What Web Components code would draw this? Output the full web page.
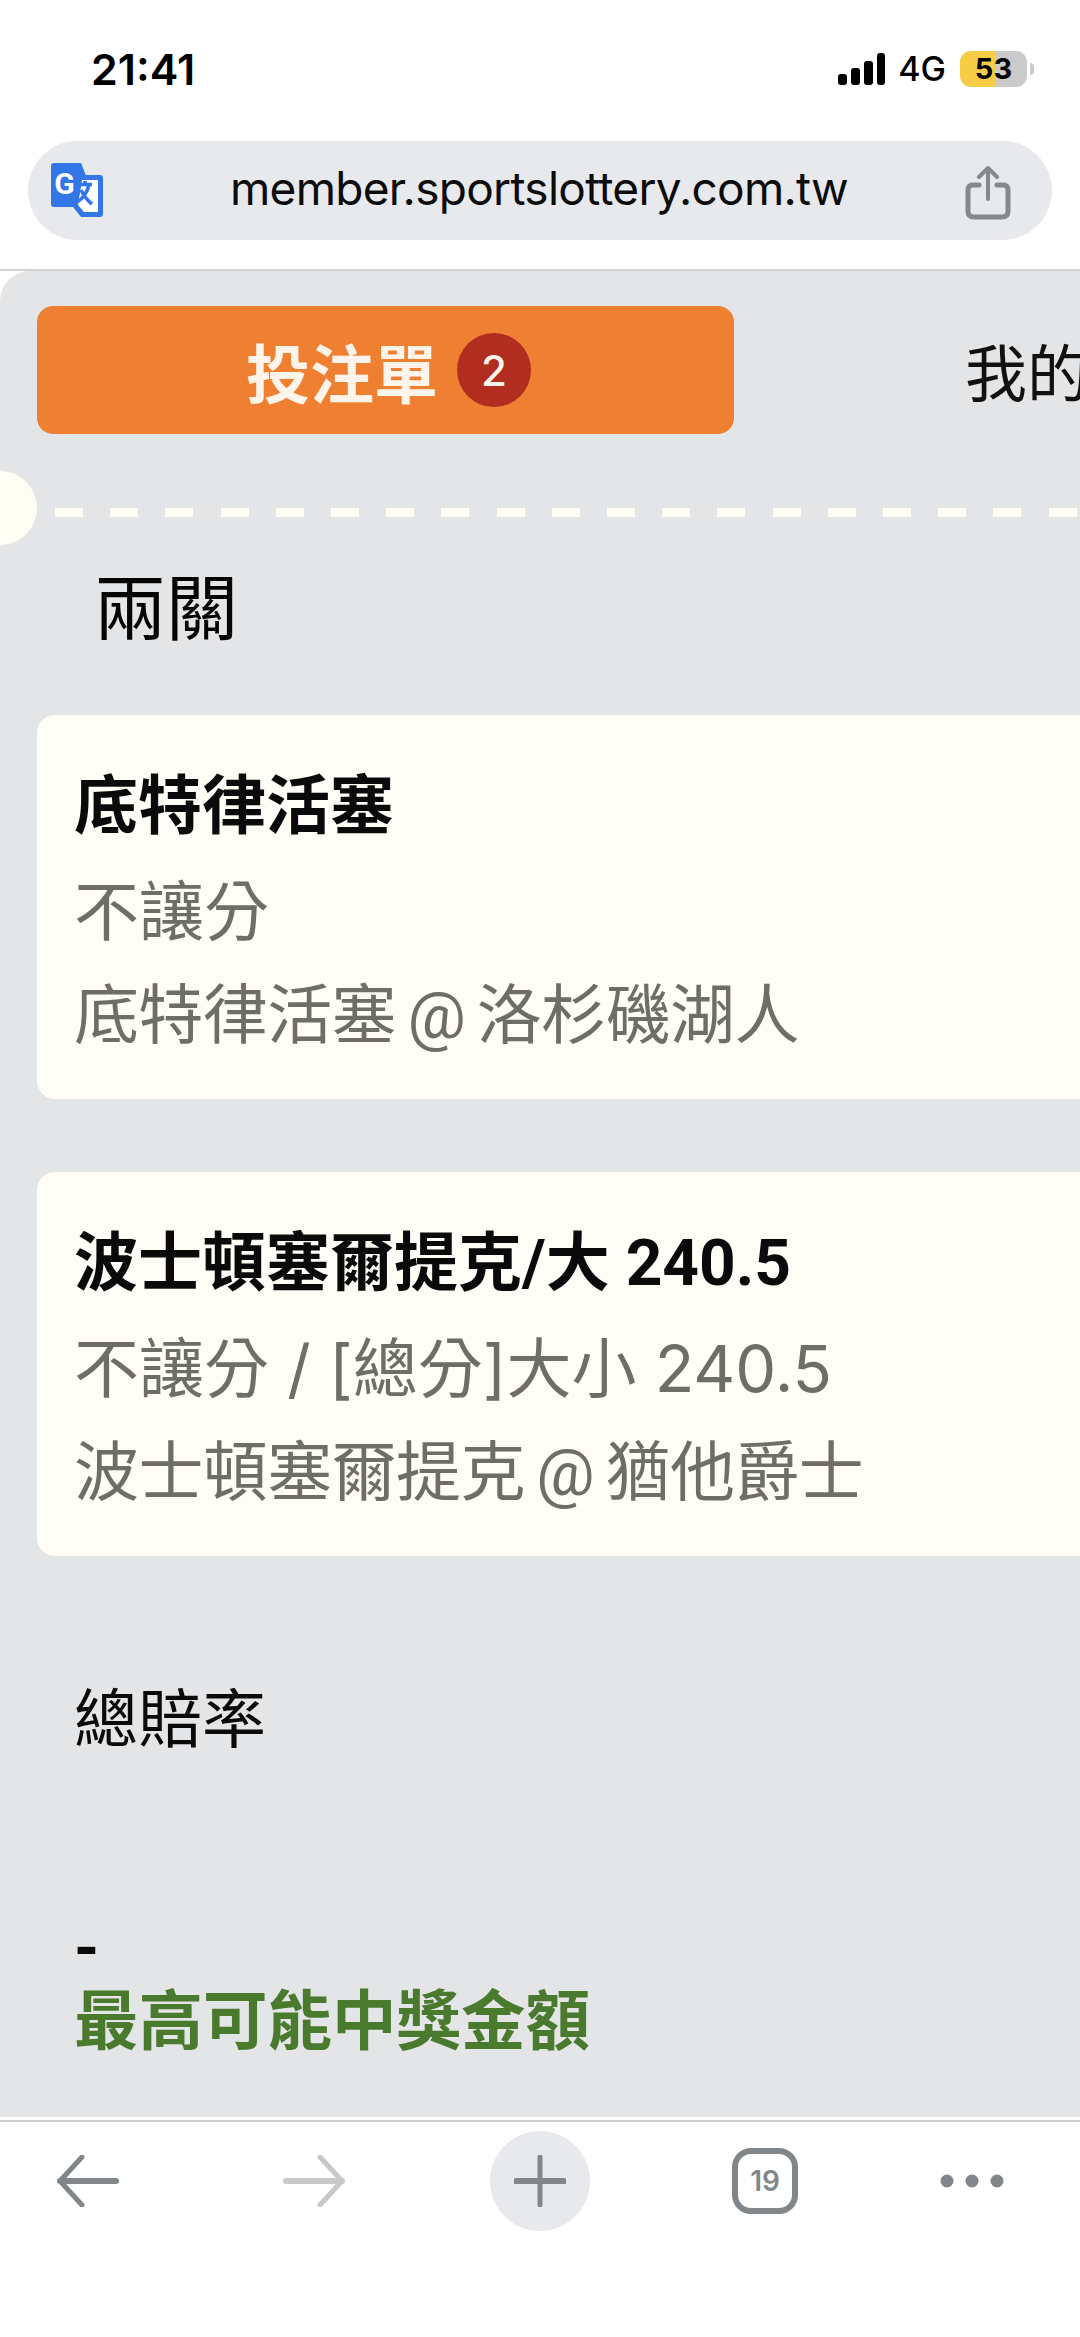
<!DOCTYPE html>
<html lang="zh-Hant">
<head>
<meta charset="utf-8">
<title>投注單</title>
<style>
  html, body { margin: 0; height: 100%; background: #fff; overflow: hidden; }
  body {
    display: flex;
    flex-direction: column;
    height: 2337px;
    font-family: Inter, "Noto Sans CJK TC", sans-serif;
  }
</style>
</head>
<body>
  <status-bar time="21:41" network="4G" battery="53"></status-bar>
  <url-bar>member.sportslottery.com.tw</url-bar>
  <bet-page>
    <bet-tabs count="2" active="投注單" other="我的注單"></bet-tabs>
    <ticket-divider></ticket-divider>
    <parlay-title>兩關</parlay-title>
    <bet-card>
      <span slot="title">底特律活塞</span>
      <span slot="market">不讓分</span>
      <span slot="pick">底特律活塞 @ 洛杉磯湖人</span>
    </bet-card>
    <bet-card>
      <span slot="title">波士頓塞爾提克/大 240.5</span>
      <span slot="market">不讓分 / [總分]大小 240.5</span>
      <span slot="pick">波士頓塞爾提克 @ 猶他爵士</span>
    </bet-card>
    <bet-summary label="總賠率" value="-" prize="最高可能中獎金額"></bet-summary>
  </bet-page>
  <browser-toolbar tabs="19"></browser-toolbar>

<script>
// status bar at the very top
class StatusBar extends HTMLElement {
  connectedCallback() {
    const time = this.getAttribute("time");
    const network = this.getAttribute("network");
    const battery = this.getAttribute("battery");
    this.attachShadow({ mode: "open" }).innerHTML = `
      <style>
        :host {
          display: flex;
          align-items: center;
          justify-content: space-between;
          height: 141px;
          padding: 0 46px 4px 91px;
          box-sizing: border-box;
          color: #000;
        }
        .time { font-size: 43px; font-weight: 600; }
        .right { display: flex; align-items: center; }
        .net { font-size: 34px; font-weight: 500; margin: 0 14px 0 13px; }
        .batt {
          width: 67px;
          height: 36px;
          border-radius: 11px;
          overflow: hidden;
          background: linear-gradient(90deg, #f8cd46 53%, #cbcbcb 53%);
          font-size: 29px;
          font-weight: 700;
          line-height: 36px;
          text-align: center;
        }
        .nub { width: 4px; height: 12px; margin-left: 3px; background: #cbcbcb; border-radius: 0 4px 4px 0; }
      </style>
      <span class="time">${time}</span>
      <div class="right">
        <svg width="47" height="32" viewBox="0 0 47 32" fill="#000">
          <rect x="0" y="21" width="9" height="11" rx="3"/>
          <rect x="13" y="15" width="9" height="17" rx="3"/>
          <rect x="26" y="8" width="9" height="24" rx="3"/>
          <rect x="39" y="0" width="8" height="32" rx="3"/>
        </svg>
        <span class="net">${network}</span>
        <div class="batt">${battery}</div>
        <div class="nub"></div>
      </div>
    `;
  }
}

class UrlBar extends HTMLElement {
  connectedCallback() {
    this.attachShadow({ mode: "open" }).innerHTML = `
      <style>
        :host {
          display: flex;
          align-items: center;
          justify-content: space-between;
          height: 99px;
          margin: 0 28px 29px;
          padding: 0 41px 0 23px;
          box-sizing: border-box;
          background: #e8e9ed;
          border-radius: 50px;
        }
        .url { font-size: 46px; color: #0c0c0c; letter-spacing: -0.7px; margin: -6px 0 0 8px; }
        .share { margin-top: 4px; }
      </style>
      <svg width="54" height="56" viewBox="0 0 54 56">
        <path d="M3 0H30L47 44H3Q0 44 0 41V3Q0 0 3 0Z" fill="#3276e8"/>
        <path d="M22 12H49Q52 12 52 15V51Q52 54 49 54H30L22 44Z" fill="#3276e8"/>
        <path d="M31 17H47V49H33L27 42Z" fill="#fff"/>
        <text x="13.5" y="31" text-anchor="middle" font-family="Roboto, sans-serif" font-weight="700" font-size="30" fill="#fff">G</text>
        <path d="M27 18.5H41M34 15V18.5M38 18.500C36 28 31 33 26 36M30 24C33 30 37 35 41 38" transform="translate(0 3)" fill="none" stroke="#3276e8" stroke-width="3.600"/>
      </svg>
      <span class="url"><slot></slot></span>
      <svg class="share" width="46" height="54" viewBox="0 0 46 54" fill="none" stroke="#85898d" stroke-linecap="round" stroke-linejoin="round">
        <path d="M14 19H8Q3 19 3 24V45Q3 51 9 51H37Q43 51 43 45V24Q43 19 38 19H32" stroke-width="5"/>
        <path d="M23 33V3M14 11L23 2L32 11" stroke-width="4"/>
      </svg>
    `;
  }
}

// the grey panel that holds the whole bet slip
class BetPage extends HTMLElement {
  connectedCallback() {
    this.attachShadow({ mode: "open" }).innerHTML = `
      <style>
        :host {
          display: flex;
          flex: 1;
          min-height: 0;
          overflow: hidden;
          border-top: 2px solid #d2d2d2;
        }
        .panel {
          display: flex;
          flex-direction: column;
          flex: 1;
          min-width: 0;
          overflow: hidden;
          background: #e4e5e7;
          border-radius: 30px 0 0 0;
          padding-top: 35px;
        }
      </style>
      <div class="panel"><slot></slot></div>
    `;
  }
}

class BetTabs extends HTMLElement {
  connectedCallback() {
    const count = this.getAttribute("count");
    const active = this.getAttribute("active");
    const other = this.getAttribute("other");
    this.attachShadow({ mode: "open" }).innerHTML = `
      <style>
        :host { display: flex; align-items: center; margin-left: 37px; white-space: nowrap; flex: none; }
        .active {
          flex: 0 0 697px;
          height: 128px;
          display: flex;
          align-items: center;
          justify-content: center;
          gap: 19px;
          box-sizing: border-box;
          padding-left: 6px;
          background: #ef8032;
          border-radius: 16px;
          color: #fff4ea;
          font-size: 64px;
          font-weight: 600;
        }
        .badge {
          width: 74px;
          height: 74px;
          border-radius: 50%;
          background: #b12d20;
          display: flex;
          align-items: center;
          justify-content: center;
          font-size: 42px;
          font-weight: 500;
          color: #fff4ea;
        }
        .other { margin-left: 231px; font-size: 62px; color: #111; }
      </style>
      <div class="active"><span>${active}</span><span class="badge">${count}</span></div>
      <div class="other">${other}</div>
    `;
  }
}

class TicketDivider extends HTMLElement {
  connectedCallback() {
    this.attachShadow({ mode: "open" }).innerHTML = `
      <style>
        :host { display: block; position: relative; flex: none; height: 74px; margin-top: 37px; }
        .notch {
          position: absolute;
          left: -37px;
          top: 0;
          width: 74px;
          height: 74px;
          border-radius: 50%;
          background: #fffdf4;
        }
        .dash {
          position: absolute;
          left: 55px;
          right: 0;
          top: 37px;
          height: 9px;
          background: repeating-linear-gradient(90deg, #fffdf4 0 28px, transparent 28px 55.200px);
        }
      </style>
      <div class="notch"></div>
      <div class="dash"></div>
    `;
  }
}

class ParlayTitle extends HTMLElement {
  connectedCallback() {
    this.attachShadow({ mode: "open" }).innerHTML = `
      <style>
        :host {
          display: block;
          flex: none;
          height: 170px;
          padding-left: 94px;
          padding-top: 13px;
          box-sizing: border-box;
          font-size: 72px;
          line-height: 100px;
          color: #050505;
        }
      </style>
      <slot></slot>
    `;
  }
}

class BetCard extends HTMLElement {
  connectedCallback() {
    this.attachShadow({ mode: "open" }).innerHTML = `
      <style>
        :host {
          display: flex;
          flex-direction: column;
          flex: none;
          width: 1100px;
          height: 384px;
          margin: 0 0 73px 37px;
          padding: 39px 0 0 37px;
          box-sizing: border-box;
          background: #fffdf6;
          border-radius: 18px;
          font-size: 65px;
          line-height: 105px;
          white-space: nowrap;
          color: #6e6e68;
        }
        .title { font-family: Roboto, "Noto Sans CJK TC", sans-serif; font-size: 64px; font-weight: 700; color: #0a0a0a; }
        .pick { font-family: Roboto, "Noto Sans CJK TC", sans-serif; word-spacing: -4px; letter-spacing: -0.6px; }
      </style>
      <div class="title"><slot name="title"></slot></div>
      <div><slot name="market"></slot></div>
      <div class="pick"><slot name="pick"></slot></div>
    `;
  }
}

class BetSummary extends HTMLElement {
  connectedCallback() {
    const label = this.getAttribute("label");
    const value = this.getAttribute("value");
    const prize = this.getAttribute("prize");
    this.attachShadow({ mode: "open" }).innerHTML = `
      <style>
        :host { display: block; flex: none; padding: 0 0 0 74px; font-size: 64px; color: #0a0a0a; }
        .label { margin-top: 40px; line-height: 100px; }
        .value { margin-top: 145px; line-height: 70px; font-family: Roboto, sans-serif; font-weight: 700; }
        .prize { line-height: 76px; margin-top: -1px; font-size: 64.500px; font-weight: 700; color: #4a7a2e; }
      </style>
      <div class="label">${label}</div>
      <div class="value">${value}</div>
      <div class="prize">${prize}</div>
    `;
  }
}

class BrowserToolbar extends HTMLElement {
  connectedCallback() {
    const tabs = this.getAttribute("tabs");
    this.attachShadow({ mode: "open" }).innerHTML = `
      <style>
        :host {
          display: grid;
          grid-template-columns: 226px 207px 242px 208px auto;
          align-items: start;
          height: 220px;
          padding: 11px 0 0 57px;
          box-sizing: border-box;
          background: #fff;
          border-top: 3px solid #fff;
          box-shadow: inset 0 3px 0 -1px #cfcfcf;
        }
        .plus {
          width: 100px;
          height: 100px;
          border-radius: 50%;
          background: #e8e9ed;
          display: flex;
          align-items: center;
          justify-content: center;
        }
        .slot { height: 100px; display: flex; align-items: center; }
        .tabs {
          width: 66px;
          height: 66px;
          box-sizing: border-box;
          border: 6px solid #81868a;
          border-radius: 19px;
          display: flex;
          align-items: center;
          justify-content: center;
          font-size: 28px;
          font-weight: 600;
          color: #81868a;
        }
      </style>
      <div class="slot">
        <svg width="62" height="52" viewBox="0 0 62 52" fill="none" stroke="#81868a" stroke-linecap="round" stroke-linejoin="round">
          <path d="M3 26H59" stroke-width="6"/>
          <path d="M25 2L3 26L25 50" stroke-width="5"/>
        </svg>
      </div>
      <div class="slot">
        <svg width="62" height="52" viewBox="0 0 62 52" fill="none" stroke="#c8c8c8" stroke-linecap="round" stroke-linejoin="round">
          <path d="M3 26H59" stroke-width="6"/>
          <path d="M37 2L59 26L37 50" stroke-width="5"/>
        </svg>
      </div>
      <div class="plus">
        <svg width="52" height="52" viewBox="0 0 52 52" fill="none" stroke="#81868a" stroke-linecap="round">
          <path d="M26 2V50" stroke-width="5"/>
          <path d="M2 26H50" stroke-width="6"/>
        </svg>
      </div>
      <div class="slot"><div class="tabs">${tabs}</div></div>
      <div class="slot">
        <svg width="64" height="14" viewBox="0 0 64 14" fill="#81868a">
          <circle cx="7" cy="7" r="6.500"/><circle cx="32" cy="7" r="6.500"/><circle cx="57" cy="7" r="6.500"/>
        </svg>
      </div>
    `;
  }
}

customElements.define("status-bar", StatusBar);
customElements.define("url-bar", UrlBar);
customElements.define("bet-page", BetPage);
customElements.define("bet-tabs", BetTabs);
customElements.define("ticket-divider", TicketDivider);
customElements.define("parlay-title", ParlayTitle);
customElements.define("bet-card", BetCard);
customElements.define("bet-summary", BetSummary);
customElements.define("browser-toolbar", BrowserToolbar);
</script>
</body>
</html>
